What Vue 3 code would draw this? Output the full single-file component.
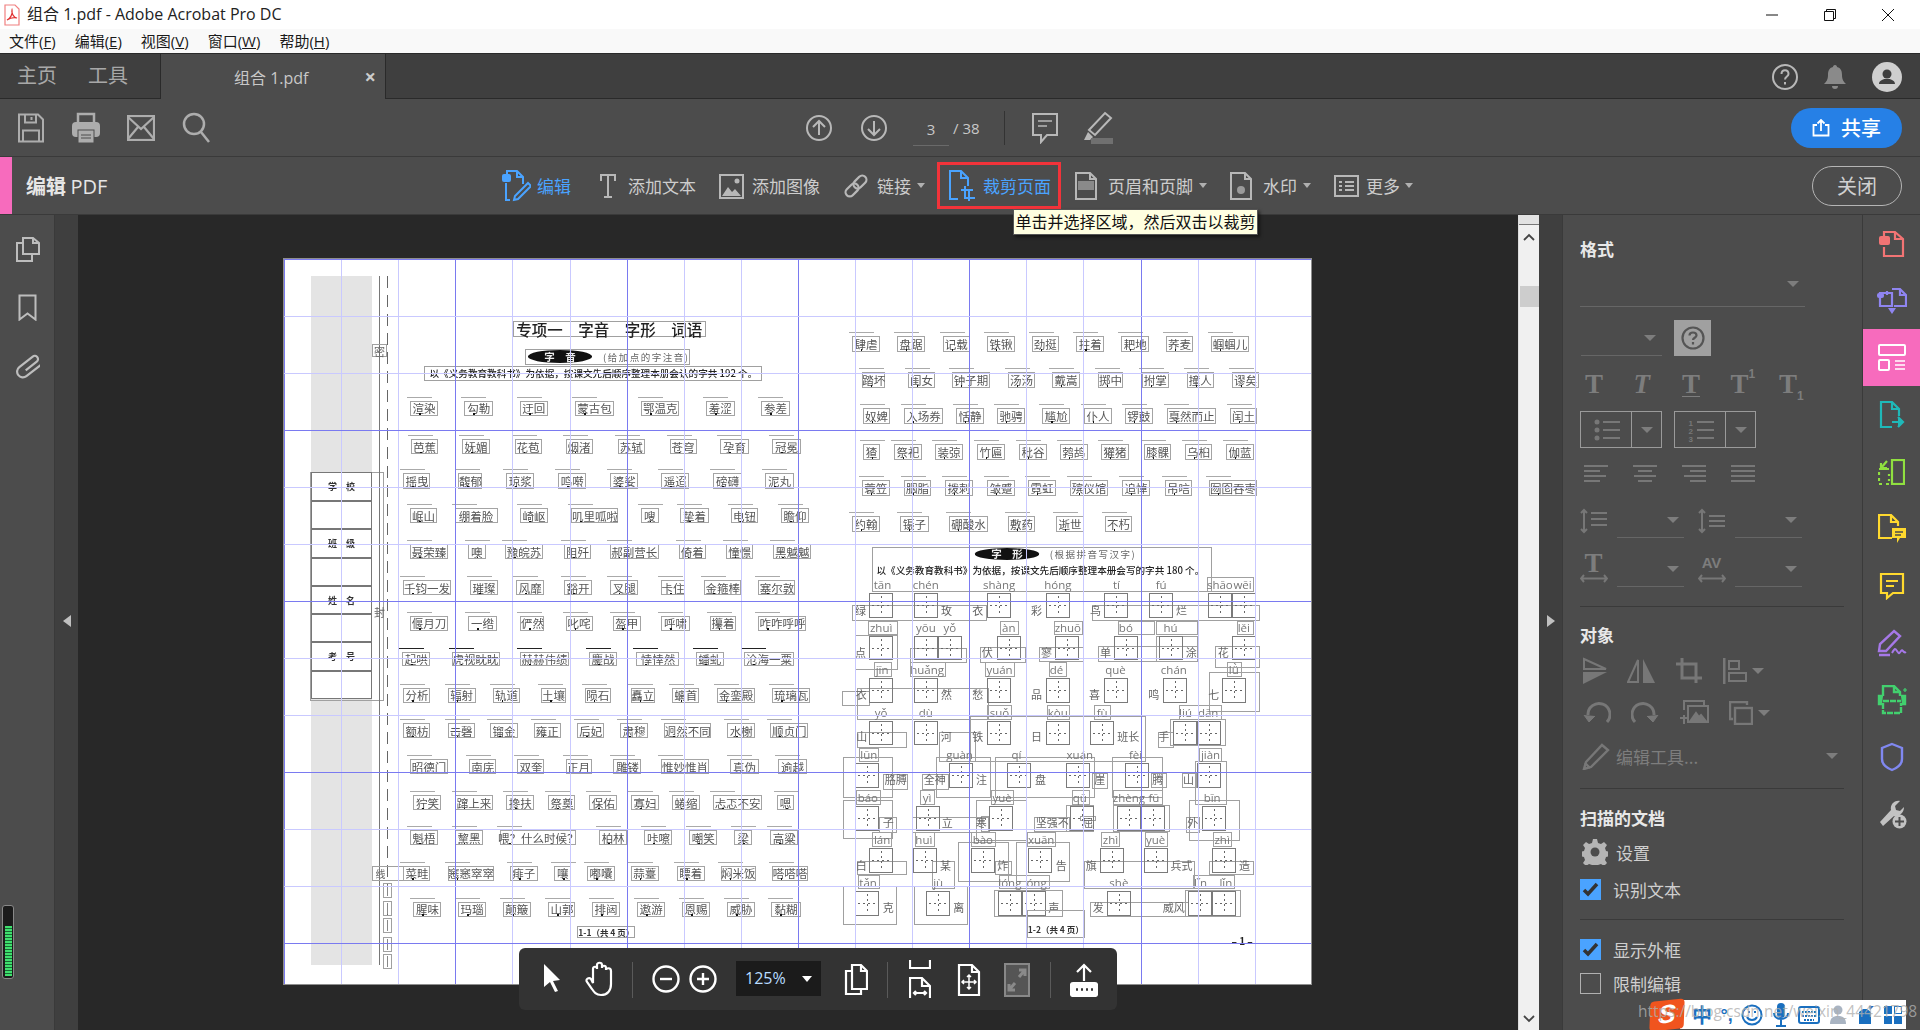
<script setup>
const pieces = []
const px = (n) => n.toFixed(1) + 'px'
const add = (cls, x1, y1, x2, y2, text = '') => pieces.push({ cls, text, style: { left: px(x1), top: px(y1), width: px(x2 - x1), height: px(y2 - y1) } })
// Left half coordinates measured at 2.904 / 3 scale, right half at 3 / 3 scale.
const lx = (x) => x / 2.904 - 4
const ly = (y) => y / 3 - 5
const rx = (x) => x / 3 + 536.5
const ry = (y) => y / 3 + 380
const L = (cls, a, b, c, d, t) => add(cls, lx(a), ly(b), lx(c), ly(d), t)
const R = (cls, a, b, c, d, t) => add(cls, rx(a), ry(b), rx(c), ry(d), t)

// page furniture on the left
L('hatch', 90, 67, 267, 2132)
L('frame', 88, 655, 303, 1342)
;[655, 742, 826, 913, 997, 1081, 1165, 1250].forEach((y, i, a) => {
  const labels = { 0: '学　校', 2: '班　级', 4: '姓　名', 6: '考　号' }
  L('trow', 90, y, 267, a[i + 1] || 1335, labels[i] || '')
})
L('vline', 288, 67, 290, 2132)
L('dline', 312, 67, 315, 2000)
L('frame lab', 266, 270, 312, 310, '密')
L('lab', 275, 1050, 303, 1095, '封')
L('frame lab-left', 266, 1837, 437, 1881, '线')
;[1888, 1942, 1993, 2050, 2101].forEach((y) => L('frame tick', 300, y, 324, y + 43))

// titles
L('frame head', 676, 200, 1236, 250, '专项一　字音　字形　词语')
L('frame', 710, 286, 1190, 334)
L('pill', 720, 288, 906, 326, '字　音')
L('note', 938, 292, 1175, 324, '(给加点的字注音)')
L('frame intro', 419, 335, 1401, 380, '以《义务教育教科书》为依据，按课文先后顺序整理本册会认的字共 192 个。')

const leftRows = [
  [442, 485, '渲染 378 458,勾勒 535 620,迂回 697 777,蒙古包 857 969,鄂温克 1049 1160,羞涩 1237 1320,参差 1398 1480'],
  [555, 601, '芭蕉 381 458,妩媚 529 609,花苞 681 760,烟渚 829 908,苏轼 980 1060,苍穹 1131 1210,孕育 1279 1361,冠冕 1430 1512'],
  [658, 704, '摇曳 358 437,馥郁 518 588,琼浆 657 739,鸣啭 808 890,婆娑 959 1041,遥迢 1107 1189,磅礴 1258 1341,泥丸 1409 1492'],
  [763, 808, '岷山 378 455,绷着脸 507 632,崎岖 698 777,叽里呱啦 846 983,嗖 1048 1100,挚着 1162 1245,电钮 1310 1388,瞻仰 1456 1535'],
  [870, 916, '聂荣臻 378 487,噢 545 597,豫皖苏 654 763,阻歼 826 902,郝副营长 958 1100,倚着 1158 1236,憧憬 1295 1375,黑魆魆 1432 1543'],
  [978, 1024, '千钧一发 358 496,璀璨 553 632,风靡 686 768,豁开 826 905,叉腿 958 1041,卡住 1107 1175,金箍棒 1232 1340,塞尔敦 1389 1497'],
  [1085, 1130, '偃月刀 378 487,一绺 547 629,俨然 698 768,叱咤 829 908,盔甲 967 1047,呼啸 1107 1190,攥着 1248 1325,咋咋呼呼 1389 1529'],
  [1193, 1237, '起哄 355 437,虎视眈眈 498 638,赫赫伟绩 698 838,鏖战 898 978,悻悻然 1035 1160,蟠虬 1208 1288,沧海一粟 1348 1492', 'dk'],
  [1301, 1347, '分析 358 437,辐射 487 568,轨道 617 698,土壤 759 830,陨石 885 960,矗立 1018 1088,螭首 1138 1218,金銮殿 1268 1380,琉璃瓦 1430 1540'],
  [1408, 1453, '额枋 358 437,击磬 487 565,镏金 611 690,雍正 737 815,后妃 863 942,肃穆 988 1068,迥然不同 1116 1252,水榭 1299 1380,顺贞门 1424 1533'],
  [1515, 1561, '昭德门 378 487,南庑 550 628,双奎 689 768,正月 829 905,雕镂 968 1050,惟妙惟肖 1107 1245,真伪 1308 1390,逾越 1447 1530'],
  [1623, 1669, '狞笑 387 469,蹿上来 507 620,搀扶 657 739,祭奠 779 858,保佑 898 980,寡妇 1020 1100,蜷缩 1138 1220,忐忑不安 1258 1400,嗯 1444 1492'],
  [1729, 1774, '魁梧 378 458,黧黑 508 590,喂？什么时候？ 640 860,柏林 927 1008,咔嚓 1058 1140,嘲笑 1189 1270,梁 1319 1372,高粱 1424 1505'],
  [1835, 1881, '菜畦 358 437,窸窸窣窣 487 622,痱子 668 748,嚷 796 846,嘟囔 892 972,蒜薹 1018 1100,瞟着 1153 1233,焖米饭 1280 1382,嗒嗒嗒 1428 1535'],
  [1943, 1989, '腥味 387 469,玛瑙 518 597,颠簸 648 728,山郭 779 858,排闼 907 987,遨游 1038 1118,恩赐 1168 1248,威胁 1298 1380,黏糊 1427 1512'],
]
leftRows.forEach(([a, b, s, extra]) => s.split(',').forEach((w) => {
  const [t, x1, x2] = w.split(' ')
  L('word ' + (extra || ''), +x1, a, +x2, b, t)
}))
L('frame foot', 863, 2015, 1032, 2051, '1-1（共 4 页）')

const rightRows = [
  [247, 293, '肆虐 94 179,盘踞 229 314,记载 367 448,铁锹 499 584,劲挺 633 716,拄着 767 851,耙地 901 987,荞麦 1036 1118,蝈蝈儿 1171 1286'],
  [355, 401, '踏坏 124 195,闺女 262 344,钟子期 394 509,汤汤 562 644,戴嵩 694 779,掷中 832 908,拊掌 963 1045,撞人 1099 1180,谬矣 1234 1316'],
  [463, 509, '奴婢 127 209,入场券 250 368,恬静 406 491,驰骋 529 614,尴尬 665 749,仆人 790 875,锣鼓 913 997,戛然而止 1039 1187,闰土 1228 1310'],
  [571, 617, '猹 127 179,祭祀 220 305,装弶 343 428,竹匾 469 554,秕谷 595 680,鹁鸪 717 802,獾猪 841 926,膝髁 970 1052,乌桕 1093 1175,伽蓝 1216 1301'],
  [679, 725, '蓑笠 123 209,胭脂 250 332,拨刺 373 458,皱蹙 499 584,霓虹 622 707,殡仪馆 748 863,追悼 904 989,吊唁 1033 1115,囫囵吞枣 1165 1310'],
  [787, 833, '约翰 94 179,镊子 238 326,硼酸水 385 503,敷药 562 644,逝世 706 791,不朽 853 935'],
]
rightRows.forEach(([a, b, s]) => s.split(',').forEach((w) => {
  const [t, x1, x2] = w.split(' ')
  R('word', +x1, a - 1155, +x2, b - 1155, t)
}))

// 字形 section: coordinates share one origin
R('frame', 154, -275, 1175, -140)
R('pill', 463, -272, 656, -238, '字　形')
R('note', 688, -270, 950, -240, '(根据拼音写汉字)')
R('intro plain', 168, -226, 1170, -190, '以《义务教育教科书》为依据，按课文先后顺序整理本册会写的字共 180 个。')

const frames = [
  [1158, -185, 1300, -140], [94, -101, 500, -55], [814, -101, 1320, -55],
  [142, -55, 233, -13], [538, -55, 596, -13], [700, -55, 788, -13], [892, -55, 1005, -13], [1005, -55, 1133, -13], [1250, -55, 1300, -13],
  [104, -13, 232, 94], [268, 27, 440, 73], [478, 25, 617, 73], [656, 25, 790, 70], [833, 22, 1133, 68], [1007, -10, 1133, 68], [1184, 22, 1320, 88],
  [160, 70, 214, 115], [268, 70, 377, 115], [493, 70, 583, 115], [685, 70, 740, 115], [1220, 70, 1265, 115],
  [64, 155, 148, 200], [108, 148, 505, 242], [1165, 100, 1318, 220],
  [500, 197, 575, 242], [680, 197, 749, 242], [820, 197, 872, 242], [1075, 197, 1205, 242],
  [108, 280, 260, 326], [355, 280, 466, 370], [1012, 280, 1060, 326], [1048, 240, 1218, 322], [448, 230, 977, 370],
  [115, 326, 175, 370], [1135, 326, 1205, 368],
  [188, 405, 264, 452], [305, 405, 386, 452], [815, 403, 862, 450], [990, 403, 1040, 447], [1085, 403, 1130, 447],
  [68, 355, 217, 476], [347, 355, 512, 476], [523, 355, 825, 476], [875, 355, 1028, 476], [1122, 367, 1220, 497],
  [106, 452, 182, 497], [298, 452, 344, 497], [512, 452, 580, 497], [755, 452, 810, 497], [877, 452, 1028, 497],
  [175, 535, 230, 581], [482, 530, 508, 578], [640, 535, 750, 580], [778, 532, 828, 545], [1096, 535, 1138, 581],
  [68, 484, 217, 601], [275, 535, 505, 581], [466, 484, 620, 605], [737, 497, 822, 578], [878, 497, 1048, 578], [1105, 484, 1258, 605],
  [155, 580, 215, 625], [284, 580, 343, 625], [452, 580, 526, 625], [620, 580, 706, 625], [842, 580, 900, 625], [974, 580, 1042, 625], [1178, 580, 1236, 625],
  [108, 665, 260, 707], [335, 665, 404, 750], [412, 610, 565, 730], [586, 610, 749, 730], [790, 665, 1125, 750], [1165, 665, 1300, 707], [523, 665, 575, 707],
  [112, 707, 178, 750], [535, 707, 688, 750], [1118, 707, 1243, 750],
  [68, 740, 230, 857], [280, 740, 443, 857], [520, 752, 728, 835], [808, 790, 1105, 835], [1093, 752, 1262, 833],
]
frames.forEach((f) => R('frame', ...f))

const cells = [
  [-137, [145, 280, 499, 676, 850, 985, 1162, 1234]],
  [-10, [145, 280, 352, 529, 703, 880, 1015, 1234]],
  [118, [145, 280, 499, 676, 850, 1027, 1204]],
  [245, [145, 280, 499, 676, 808, 1058, 1130]],
  [373, [104, 385, 559, 736, 912, 1130]],
  [502, [104, 285, 505, 748, 888, 962, 1143]],
  [628, [145, 278, 450, 622, 838, 970, 1174]],
  [757, [104, 316, 531, 603, 859, 1103, 1175]],
]
cells.forEach(([y, xs]) => xs.forEach((x) => R('cell', x, y, x + 73, y + 73)))

const pin = [
  [-164, 'tān 186,chén 316,shàng 536,hóng 712,tí 888,fú 1022,shāo 1198,wēi 1266'],
  [-35, 'zhuì 182,yōu 316,yǒ 388,àn 565,zhuō 742,bó 916,hú 1050,lěi 1270'],
  [92, 'jīn 185,huǎng 320,yuán 537,dé 708,què 885,chán 1060,lǜ 1240'],
  [220, 'yǒ 182,dù 316,suǒ 537,kòu 712,fù 845,liú 1095,dān 1163'],
  [346, 'lūn 145,guàn 417,qí 588,xuán 778,fèi 945,jiàn 1170'],
  [474, 'báo 142,yì 320,yuè 545,qū 778,zhèng 925,fū 1000,bīn 1175'],
  [601, 'lán 185,huì 310,bào 487,xuān 662,zhì 870,yuè 1005,zhì 1205'],
  [730, 'tǎn 143,jù 353,lóng 568,óng 648,shè 895,lǐn 1140,lǐn 1216'],
]
pin.forEach(([y, s]) => s.split(',').forEach((w) => {
  const [t, x] = w.split(' ')
  R('pin', +x - 70, y - 24, +x + 70, y + 24, t)
}))
const labs = [
  [-87, '绿 120,玫 378,衣 472,彩 648,鸟 825,烂 1083'],
  [38, '点 120,伏 500,寥 678,单 855,涂 1112,花 1208'],
  [165, '衣 122,然 378,愁 472,品 648,喜 822,鸣 1000,七 1180'],
  [292, '山 124,河 377,铁 472,日 648,班长 923,手 1030'],
  [420, '胳膊 226,全神 343,注 483,盘 660,崖 838,腾 1012,山 1104'],
  [550, '子 203,立 380,寒 482,坚强不 695,屈 802,外 1117'],
  [678, '白 122,某 375,炸 547,告 722,旗 812,兵式 1083,造 1272'],
  [805, '克 203,离 415,声 700,发 833,威风 1060'],
]
labs.forEach(([y, s]) => s.split(',').forEach((w) => {
  const [t, x] = w.split(' ')
  R('lab', +x - 70, y - 24, +x + 70, y + 24, t)
}))
R('frame foot low', 619, 812, 793, 898, '1-2（共 4 页）')
R('lab pageno', 1200, 885, 1330, 925, '– 1 –')

const vLines = Array.from({ length: 18 }, (_, k) => ({ left: px(57.1 * k), dark: k % 3 === 0 }))
const hLines = Array.from({ length: 13 }, (_, k) => ({ top: px(57 * k), dark: k % 3 === 0 }))
</script>

<template>
  <div class="app">
    <header class="titlebar">
      <svg class="pdf-ico" width="16" height="22" viewBox="0 0 16 22" fill="none">
        <path d="M1 1h10l4 4v16H1z" fill="#fff" stroke="#f08080" stroke-width="1.2" />
        <path d="M3 16c3-1 6-6 5-10-1 3 2 8 5 8-3-1-7 0-10 2z" stroke="#e03030" stroke-width="1.2" />
      </svg>
      <span class="title-text">组合 1.pdf - Adobe Acrobat Pro DC</span>
      <div class="winbtns">
        <svg width="14" height="14" viewBox="0 0 14 14"><path d="M1 7h12" stroke="#111" /></svg>
        <svg width="14" height="14" viewBox="0 0 14 14" fill="none" stroke="#111"><path d="M1.5 3.5h9v9h-9zM3.5 3.5v-2h9v9h-2" /></svg>
        <svg width="14" height="14" viewBox="0 0 14 14"><path d="M1 1l12 12M13 1L1 13" stroke="#111" /></svg>
      </div>
    </header>

    <nav class="menubar">
      <span>文件(<u>F</u>)</span><span>编辑(<u>E</u>)</span><span>视图(<u>V</u>)</span><span>窗口(<u>W</u>)</span><span>帮助(<u>H</u>)</span>
    </nav>

    <div class="tabbar">
      <div class="home-tabs"><span>主页</span><span>工具</span></div>
      <div class="doc-tab"><span class="doc-name">组合 1.pdf</span><span class="doc-x">×</span></div>
      <div class="tab-right">
        <svg width="26" height="26" viewBox="0 0 26 26" fill="none" stroke="#b8b8b8" stroke-width="2"><circle cx="13" cy="13" r="12" /><path d="M9.5 10c0-5 7-5 7 0 0 2.500-3.500 2.500-3.500 5.500" /><path d="M13 18v2.500" /></svg>
        <svg width="24" height="26" viewBox="0 0 24 26" fill="#8a8a8a"><path d="M12 1c1.500 0 2 1 2 2 4 1 5 4 5 8 0 5 2 7 4 9H1c2-2 4-4 4-9 0-4 1-7 5-8 0-1 .5-2 2-2zM9 22h6c0 2-1 3-3 3s-3-1-3-3z" /></svg>
        <svg width="30" height="30" viewBox="0 0 30 30"><circle cx="15" cy="15" r="15" fill="#cfcfcf" /><circle cx="15" cy="12" r="4.500" fill="#3f3f3f" /><path d="M7 22c0-3 3-4 5-5h6c2 1 5 2 5 5z" fill="#3f3f3f" /></svg>
      </div>
    </div>

    <div class="toolbar tb1">
      <span class="slot55">
        <svg width="26" height="30" viewBox="0 0 26 30" fill="none" stroke="#adadad" stroke-width="2"><path d="M1 1.500h19l5 5v22H1z" /><path d="M7 1.500v8h11v-8M13.500 4v3M5 28.500v-11h16v11" /></svg>
      </span>
      <span class="slot55">
        <svg width="28" height="32" viewBox="0 0 28 32"><path d="M6 10V2h16v8" fill="none" stroke="#adadad" stroke-width="2.500" /><rect x="0" y="10" width="28" height="15" rx="4" fill="#adadad" /><rect x="6" y="18" width="16" height="13" fill="#adadad" stroke="#4c4c4c" /><path d="M9 23h10M9 26h10" stroke="#4c4c4c" /></svg>
      </span>
      <span class="slot55">
        <svg width="28" height="26" viewBox="0 0 28 26" fill="none" stroke="#adadad" stroke-width="2.200"><rect x="1" y="1" width="26" height="24" /><path d="M1 2l13 12L27 2M1 24l10-12M27 24L17 12" /></svg>
      </span>
      <span class="slot55">
        <svg width="28" height="32" viewBox="0 0 28 32" fill="none" stroke="#adadad" stroke-width="2.500"><circle cx="12" cy="12" r="10" /><path d="M19 20l8 10" /></svg>
      </span>
      <span class="slot55 nav-first">
        <svg width="26" height="26" viewBox="0 0 26 26" fill="none" stroke="#b8b8b8" stroke-width="2"><circle cx="13" cy="13" r="12" /><path d="M13 20V6M7 12l6-6 6 6" /></svg>
      </span>
      <span class="slot55">
        <svg width="26" height="26" viewBox="0 0 26 26" fill="none" stroke="#b8b8b8" stroke-width="2"><circle cx="13" cy="13" r="12" /><path d="M13 6v14M7 14l6 6 6-6" /></svg>
      </span>
      <span class="page-input">3</span>
      <span class="page-total">/ 38</span>
      <span class="tb-sep"></span>
      <span class="slot-comment">
        <svg width="26" height="32" viewBox="0 0 26 32" fill="none" stroke="#b8b8b8" stroke-width="2"><path d="M1 2h24v21H15l-6 7v-7H1z" /><path d="M6 9h14M6 14h9" stroke-width="1.500" /></svg>
      </span>
      <span class="slot-mark">
        <svg width="30" height="34" viewBox="0 0 30 34" fill="none"><path d="M22 2l6 5L12 24l-6-5z" stroke="#b8b8b8" stroke-width="2" /><path d="M5 21l5 5-3 3H1z" fill="#b8b8b8" /><rect x="8" y="27" width="22" height="6" fill="#707070" /></svg>
      </span>
      <button class="share">
        <svg width="18" height="18" viewBox="0 0 18 18" fill="none" stroke="#fff" stroke-width="1.800"><path d="M5 6H1.500v10.500h15V6H13M9 12V1M5.500 4.500L9 1l3.500 3.500" /></svg>
        <span>共享</span>
      </button>
    </div>

    <div class="toolbar tb2">
      <span class="pink-mark"></span>
      <span class="tb2-title">编辑 <span class="pdf-word">PDF</span></span>
      <div class="tools">
        <span class="tool blue t-edit">
          <svg width="29" height="32" viewBox="0 0 29 32" fill="none" stroke="#4aa3ff" stroke-width="2"><path d="M5 6V1h10l6 6v7M8 30H4V13" /><path d="M15 1v6h6" /><rect x="0" y="4" width="9" height="8" rx="2" fill="#4aa3ff" stroke="none" /><path d="M26 13l3 3-13 13-4 1 1-4z" /></svg>
          编辑
        </span>
        <span class="tool t-text">
          <svg width="28" height="28" viewBox="0 0 28 28" fill="#b8b8b8"><path d="M6 2h16v7h-2V4h-5v20h3v2H10v-2h3V4H8v5H6z" /></svg>
          添加文本
        </span>
        <span class="tool t-image">
          <svg width="25" height="26" viewBox="0 0 25 26"><rect x="1" y="2" width="23" height="23" fill="none" stroke="#b8b8b8" stroke-width="2" /><path d="M3 23l6-9 4 5 3-3 6 7z" fill="#b8b8b8" /><circle cx="18" cy="8" r="2.500" fill="#b8b8b8" /></svg>
          添加图像
        </span>
        <span class="tool t-image">
          <svg width="26" height="28" viewBox="0 0 28 28" fill="none" stroke="#b8b8b8" stroke-width="2.400"><g transform="rotate(-45 14 14)"><rect x="0" y="9.500" width="16" height="9" rx="4.500" /><rect x="12" y="9.500" width="16" height="9" rx="4.500" /></g></svg>
          链接<i class="caret"></i>
        </span>
        <span class="tool blue t-crop">
          <svg width="26" height="32" viewBox="0 0 26 32" fill="none" stroke="#4aa3ff" stroke-width="2"><path d="M9 29H1V1h11l7 7v8M12 1v7h7" /><path d="M12 20h12M16 16v12h10M20 20v11" /></svg>
          裁剪页面
        </span>
        <span class="tool t-header">
          <svg width="22" height="28" viewBox="0 0 22 28"><path d="M1 1h14l6 6v20H1z" fill="none" stroke="#b8b8b8" stroke-width="2" /><rect x="3" y="9" width="16" height="9" fill="#8a8a8a" /><path d="M15 1v6h6" fill="none" stroke="#b8b8b8" stroke-width="2" /></svg>
          页眉和页脚<i class="caret"></i>
        </span>
        <span class="tool t-header">
          <svg width="22" height="28" viewBox="0 0 22 28"><path d="M1 1h14l6 6v20H1zM15 1v6h6" fill="none" stroke="#b8b8b8" stroke-width="2" /><circle cx="11" cy="18" r="4" fill="#9a9a9a" /></svg>
          水印<i class="caret"></i>
        </span>
        <span class="tool t-more">
          <svg width="25" height="24" viewBox="0 0 25 24" fill="none" stroke="#b8b8b8" stroke-width="2"><rect x="1" y="2" width="23" height="20" /><path d="M5 8h3M5 12h3M5 16h3M11 8h9M11 12h9M11 16h9" /></svg>
          更多<i class="caret"></i>
        </span>
      </div>
      <button class="close">关闭</button>
    </div>

    <main class="main">
      <aside class="left-rail">
        <svg width="25" height="27" viewBox="0 0 25 27" fill="none" stroke="#bdbdbd" stroke-width="2"><path d="M8 2h10l6 5v11H8z" /><path d="M18 2v5h6M8 7H2v18h15v-7" /></svg>
        <svg width="19" height="27" viewBox="0 0 19 27" fill="none" stroke="#bdbdbd" stroke-width="2"><path d="M1.500 1.500h16v24l-8-6-8 6z" /></svg>
        <svg width="26" height="27" viewBox="0 0 26 27" fill="none" stroke="#bdbdbd" stroke-width="2.200"><g transform="rotate(-38 13 13.500) translate(0 7)"><path d="M9 9.500h14a3 3 0 0 0 0-6.500H6a5.500 5.500 0 0 0 0 11.500h18" /></g></svg>
        <div class="meter"><div class="meter-fill"></div></div>
      </aside>
      <div class="strip"><i class="tri-left"></i></div>

      <section class="doc">
        <div class="page">
          <div class="page-content">
            <div v-for="(p, i) in pieces" :key="i" :class="['pc', p.cls]" :style="p.style">{{ p.text }}</div>
          </div>
          <i v-for="v in vLines" :key="'v' + v.left" class="gv" :class="{ dark: v.dark }" :style="{ left: v.left }"></i>
          <i v-for="h in hLines" :key="'h' + h.top" class="gh" :class="{ dark: h.dark }" :style="{ top: h.top }"></i>
        </div>
        <div class="tip">单击并选择区域，然后双击以裁剪</div>
        <div class="float-bar">
          <svg class="f-arrow" width="18" height="30" viewBox="0 0 18 30" fill="#fff"><path d="M1 1l16 16-7 1 5 10-3 1-5-10-6 5z" /></svg>
          <svg class="f-hand" width="30" height="36" viewBox="0 0 30 36" fill="none" stroke="#fff" stroke-width="2.200"><path d="M8 22V8c0-3 4-3 4 0V4c0-3 5-3 5 0v3c0-3 4-3 4 0v2c0-2 5-3 5 1v13c0 7-4 11-10 11-5 0-7-3-9-6l-5-7c-2-3 2-5 4-3z" /></svg>
          <i class="f-sep s1"></i>
          <svg class="f-minus" width="28" height="28" viewBox="0 0 28 28" fill="none" stroke="#fff" stroke-width="2.400"><circle cx="14" cy="14" r="12.500" /><path d="M8 14h12" /></svg>
          <svg class="f-plus" width="28" height="28" viewBox="0 0 28 28" fill="none" stroke="#fff" stroke-width="2.400"><circle cx="14" cy="14" r="12.500" /><path d="M8 14h12M14 8v12" /></svg>
          <div class="f-zoom"><span>125%</span><i class="f-caret"></i></div>
          <svg class="f-copy" width="24" height="34" viewBox="0 0 24 34" fill="none" stroke="#fff" stroke-width="2.200"><path d="M8 2h9l6 6v18H8z" /><path d="M17 2v6h6M8 8H2v23h15v-5" /></svg>
          <i class="f-sep s2"></i>
          <svg class="f-fitw" width="22" height="38" viewBox="0 0 22 38" fill="none" stroke="#fff" stroke-width="2.200"><path d="M1 0v8h20V0M1 38V18h12l8 8v12M13 18v8h8M5 33h12M7 31l-2 2 2 2M15 31l2 2-2 2" /></svg>
          <svg class="f-fitp" width="24" height="34" viewBox="0 0 24 34" fill="none" stroke="#fff" stroke-width="2.200"><path d="M2 2h13l7 7v23H2zM15 2v7h7" /><path d="M12 12v14M5 19h14M10 14l2-2 2 2M10 24l2 2 2-2M7 17l-2 2 2 2M17 17l2 2-2 2" stroke-width="1.500" /></svg>
          <svg class="f-full" width="26" height="34" viewBox="0 0 26 34"><rect x="1" y="1" width="24" height="32" fill="#555" stroke="#888" stroke-width="2" /><path d="M15 14l6-7M15 7h6v6M11 20l-6 7M5 21v6h6" fill="none" stroke="#8a8a8a" stroke-width="3" /></svg>
          <i class="f-sep s3"></i>
          <svg class="f-up" width="28" height="34" viewBox="0 0 28 34" fill="none" stroke="#fff" stroke-width="2.200"><path d="M14 18V2M7 9l7-7 7 7" /><rect x="1" y="20" width="26" height="13" rx="2" fill="#fff" /><path d="M6 26.500h2M11 26.500h2M16 26.500h2M21 26.500h2" stroke="#333" stroke-width="2.500" /></svg>
        </div>
      </section>

      <div class="scrollbar">
        <div class="sb-cap"></div>
        <svg class="sb-up" width="12" height="8" viewBox="0 0 12 8" fill="none" stroke="#444" stroke-width="1.800"><path d="M1 7l5-5 5 5" /></svg>
        <div class="sb-thumb"></div>
        <svg class="sb-down" width="12" height="8" viewBox="0 0 12 8" fill="none" stroke="#444" stroke-width="1.800"><path d="M1 1l5 5 5-5" /></svg>
      </div>
      <div class="strip strip-r"><i class="tri-right"></i></div>

      <aside class="panel">
        <h3 class="p-title first">格式</h3>
        <div class="drop font-drop"><i class="caret big"></i></div>
        <div class="size-row">
          <div class="drop size-drop"><i class="caret big"></i></div>
          <div class="qbox"><svg width="24" height="24" viewBox="0 0 24 24" fill="none" stroke="#555" stroke-width="2.200"><circle cx="12" cy="12" r="10.500" /><path d="M8.500 9.500c0-4 7-4 7 0 0 2-3.500 2.500-3.500 4.500M12 16v2.500" /></svg></div>
        </div>
        <div class="t-row">
          <span class="ft">T</span><span class="ft ital">T</span><span class="ft under">T</span><span class="ft">T<sup>1</sup></span><span class="ft">T<sub>1</sub></span>
        </div>
        <div class="list-row">
          <div class="listbox">
            <div class="lb-main"><svg width="26" height="24" viewBox="0 0 26 24" fill="#777"><circle cx="3" cy="4" r="2.500" /><circle cx="3" cy="12" r="2.500" /><circle cx="3" cy="20" r="2.500" /><path d="M9 3h17v2H9zM9 11h17v2H9zM9 19h17v2H9z" /></svg></div>
            <div class="lb-arrow"><i class="caret big"></i></div>
          </div>
          <div class="listbox">
            <div class="lb-main"><svg width="26" height="24" viewBox="0 0 26 24" fill="#777"><path d="M9 3h17v2H9zM9 11h17v2H9zM9 19h17v2H9z" /><text x="0.500" y="7.500" font-size="8" font-weight="700" font-family="Liberation Sans">1</text><text x="0.500" y="15.500" font-size="8" font-weight="700" font-family="Liberation Sans">2</text><text x="0.500" y="23.500" font-size="8" font-weight="700" font-family="Liberation Sans">3</text></svg></div>
            <div class="lb-arrow"><i class="caret big"></i></div>
          </div>
        </div>
        <div class="align-row">
          <svg width="24" height="18" viewBox="0 0 24 18" stroke="#777" stroke-width="2"><path d="M0 1h24M0 6h16M0 11h22M0 16h16" /></svg>
          <svg width="24" height="18" viewBox="0 0 24 18" stroke="#777" stroke-width="2"><path d="M0 1h24M5 6h14M1 11h22M5 16h14" /></svg>
          <svg width="24" height="18" viewBox="0 0 24 18" stroke="#777" stroke-width="2"><path d="M0 1h24M8 6h16M2 11h22M8 16h16" /></svg>
          <svg width="24" height="18" viewBox="0 0 24 18" stroke="#777" stroke-width="2"><path d="M0 1h24M0 6h24M0 11h24M0 16h24" /></svg>
        </div>
        <div class="spacing-row">
          <svg width="27" height="26" viewBox="0 0 27 26" fill="none" stroke="#777" stroke-width="2"><path d="M4 2v22M1 5l3-3 3 3M1 21l3 3 3-3M11 5h16M11 11h16M11 17h16" /></svg>
          <div class="drop num-drop"><i class="caret big"></i></div>
          <svg width="27" height="26" viewBox="0 0 27 26" fill="none" stroke="#777" stroke-width="2"><path d="M4 2v22M1 5l3-3 3 3M1 21l3 3 3-3M11 8h16M11 13h16M11 18h16" /></svg>
          <div class="drop num-drop"><i class="caret big"></i></div>
        </div>
        <div class="scale-row">
          <span class="scale-ic"><b class="ft tiny">T</b><svg width="28" height="9" viewBox="0 0 28 9" fill="none" stroke="#777" stroke-width="2"><path d="M1 4.500h26M4 1L1 4.500 4 8M24 1l3 3.500L24 8" /></svg></span>
          <div class="drop num-drop"><i class="caret big"></i></div>
          <span class="scale-ic"><b class="av">AV</b><svg width="28" height="9" viewBox="0 0 28 9" fill="none" stroke="#777" stroke-width="2"><path d="M1 4.500h26M4 1L1 4.500 4 8M24 1l3 3.500L24 8" /></svg></span>
          <div class="drop num-drop"><i class="caret big"></i></div>
        </div>
        <hr class="divider d1" />
        <h3 class="p-title t2">对象</h3>
        <div class="obj-row r1">
          <svg width="24" height="28" viewBox="0 0 24 28" fill="#777"><path d="M1 2l22 10H1z" fill="none" stroke="#777" stroke-width="2" /><path d="M0 15h24L0 27z" /></svg>
          <svg width="28" height="26" viewBox="0 0 28 26" fill="#777"><path d="M11 2L1 24h10z" fill="none" stroke="#777" stroke-width="2" /><path d="M16 1l12 24H16z" /></svg>
          <svg width="28" height="28" viewBox="0 0 28 28" fill="none" stroke="#777" stroke-width="3"><path d="M1 7h20v19M7 1v20h20" /></svg>
          <span class="obj-drop"><svg width="24" height="26" viewBox="0 0 24 26" fill="none" stroke="#777" stroke-width="2"><path d="M1 0v26" stroke-width="3" /><rect x="6" y="3" width="10" height="8" /><rect x="6" y="15" width="17" height="8" /></svg><i class="caret big"></i></span>
        </div>
        <div class="obj-row r2">
          <svg width="28" height="26" viewBox="0 0 28 26" fill="none" stroke="#777" stroke-width="3"><path d="M24 22a11 11 0 1 0-19-7" /><path d="M1 15l5 7 6-6" fill="#777" stroke-width="1" /></svg>
          <svg width="28" height="26" viewBox="0 0 28 26" fill="none" stroke="#777" stroke-width="3"><path d="M4 22a11 11 0 1 1 19-7" /><path d="M27 15l-5 7-6-6" fill="#777" stroke-width="1" /></svg>
          <svg width="30" height="26" viewBox="0 0 30 26" fill="none" stroke="#777" stroke-width="2"><path d="M5 10V1h20v4" /><rect x="9" y="6" width="20" height="16" /><path d="M12 20l5-7 3 4 2-2 4 5z" fill="#777" /><path d="M1 18h8M5 15v9" /></svg>
          <span class="obj-drop"><svg width="24" height="24" viewBox="0 0 24 24" fill="none" stroke="#777" stroke-width="2.400"><path d="M4 18H1V1h17v3" /><rect x="6" y="7" width="17" height="16" /></svg><i class="caret big"></i></span>
        </div>
        <div class="tool-row">
          <svg width="28" height="28" viewBox="0 0 28 28" fill="none" stroke="#777" stroke-width="2.400"><path d="M20 3l6 5L9 25l-7 2 2-7z" /><path d="M3 21l5 5" /></svg>
          <span class="dis">编辑工具...</span>
          <i class="caret big push"></i>
        </div>
        <hr class="divider d2" />
        <h3 class="p-title t3">扫描的文档</h3>
        <div class="setting">
          <svg width="26" height="26" viewBox="0 0 26 26" fill="#b5b5b5"><path d="M11 0h4l1 4 3 1 3-2 3 3-2 3 1 3 4 1v4l-4 1-1 3 2 3-3 3-3-2-3 1-1 4h-4l-1-4-3-1-3 2-3-3 2-3-1-3-4-1v-4l4-1 1-3-2-3 3-3 3 2 3-1z" /><circle cx="13" cy="13" r="4.500" fill="#4c4c4c" /></svg>
          <span>设置</span>
        </div>
        <label class="check c1"><i class="box on"><svg width="17" height="15" viewBox="0 0 17 15" fill="none" stroke="#333" stroke-width="3.500"><path d="M2 8l4 4 9-10" /></svg></i><span>识别文本</span></label>
        <hr class="divider d3" />
        <label class="check c2"><i class="box on"><svg width="17" height="15" viewBox="0 0 17 15" fill="none" stroke="#333" stroke-width="3.500"><path d="M2 8l4 4 9-10" /></svg></i><span>显示外框</span></label>
        <label class="check c3"><i class="box"></i><span>限制编辑</span></label>
      </aside>

      <aside class="right-rail">
        <span class="rr"><svg width="26" height="28" viewBox="0 0 26 28" fill="none" stroke="#f27474" stroke-width="2.200"><path d="M5 6V2h11l8 7v17H5v-9" /><path d="M16 2v7h8" /><rect x="0" y="6" width="11" height="9" rx="2" fill="#f27474" stroke="none" /></svg></span>
        <span class="rr"><svg width="30" height="30" viewBox="0 0 30 30" fill="none" stroke="#8f85f0" stroke-width="2.200"><path d="M3 7h12v13H3zM15 3h8l6 6v11H17" /><path d="M10 5v4M23 3v6h6" /><rect x="0" y="7" width="7" height="5" rx="2" fill="#8f85f0" stroke="none" /><path d="M11 22h8l-4 6z" fill="#8f85f0" stroke="none" /></svg></span>
        <span class="rr rail-active"><svg width="28" height="28" viewBox="0 0 28 28" fill="none" stroke="#fff" stroke-width="2"><rect x="1" y="1" width="26" height="10" rx="1" /><rect x="1" y="16" width="10" height="10" rx="1" /><path d="M17 17h10M17 21h10M17 25h10" stroke-width="1.500" /></svg></span>
        <span class="rr"><svg width="26" height="28" viewBox="0 0 26 28" fill="none" stroke="#1fb8b8" stroke-width="2.200"><path d="M13 26H2V1h11l7 7v7M13 1v7h7" /><path d="M13 21h10M19 16l5 5-5 5" fill="#1fb8b8" /></svg></span>
        <span class="rr"><svg width="27" height="26" viewBox="0 0 27 26" fill="none" stroke="#90e040" stroke-width="2.200"><rect x="14" y="1" width="12" height="24" /><path d="M1 10h10M1 13v3M1 19v3M1 25h3M8 25h3M11 15v2M11 20v2M9 2L3 9" /><path d="M3 4v5h6" /></svg></span>
        <span class="rr"><svg width="28" height="30" viewBox="0 0 28 30" fill="none" stroke="#ffd92e" stroke-width="2.200"><path d="M14 24H1V1h12l7 7v4M13 1v7h7" /><path d="M14 14h14v10h-6l-3 5v-5h-5z" fill="#ffd92e" stroke="none" /><path d="M17 18h8M17 21h6" stroke="#4c4c4c" stroke-width="1.400" /></svg></span>
        <span class="rr"><svg width="26" height="28" viewBox="0 0 26 28" fill="none" stroke="#ffd92e" stroke-width="2.200"><path d="M2 2h22v19H14l-6 5v-5H2z" /><path d="M7 9h12M7 14h8" /></svg></span>
        <span class="rr"><svg width="30" height="28" viewBox="0 0 30 28" fill="none" stroke="#a678e8" stroke-width="2.400"><path d="M17 2l6 5L9 22H2l1-7zM2 26h11" /><path d="M15 24c3-5 3-5 5-2s2 3 4 0 2 3 5 1" stroke-width="2" /></svg></span>
        <span class="rr"><svg width="30" height="30" viewBox="0 0 30 30" fill="none" stroke="#42d06e" stroke-width="2.400"><path d="M6 11V1h11l6 6v4M17 1v6h6" /><path d="M6 11H2v8h3M24 11h4v8h-3" fill="#42d06e" /><path d="M6 16h18M6 18v10h18V18" stroke-dasharray="6 1" /><path d="M28 3v4M26 5h4" stroke-width="1.200" /></svg></span>
        <span class="rr"><svg width="24" height="30" viewBox="0 0 24 30" fill="none" stroke="#8088f0" stroke-width="2.400"><path d="M12 2l10 4v11c0 5-5 9-10 11C7 26 2 22 2 17V6z" /></svg></span>
        <span class="rr"><svg width="30" height="30" viewBox="0 0 30 30"><path d="M3 23l11-12c-1-5 3-10 9-9l-5 5 1 4 4 1 4-4c0 6-5 10-10 9L6 27z" fill="#c2c2c2" /><circle cx="22.500" cy="22.500" r="7" fill="#c2c2c2" /><path d="M22.500 18v9M18 22.500h9" stroke="#4c4c4c" stroke-width="2" /></svg></span>
      </aside>
    </main>

    <div class="ime">
      <span class="ime-logo">S</span>
      <div class="ime-bar">
        <b class="ime-zh">中</b>
        <span class="ime-p">°,</span>
        <svg width="22" height="22" viewBox="0 0 22 22" fill="none" stroke="#1a6fbf" stroke-width="2"><circle cx="11" cy="11" r="9.500" /><path d="M6 13c2 4 8 4 10 0M8 7v2M14 7v2" /></svg>
        <svg width="18" height="24" viewBox="0 0 18 24" fill="none" stroke="#1a6fbf" stroke-width="2"><rect x="6" y="1" width="6" height="13" rx="3" fill="#1a6fbf" /><path d="M2 10c0 8 14 8 14 0M9 17v5M4 23h10" /></svg>
        <svg width="22" height="18" viewBox="0 0 22 18" fill="none" stroke="#1a6fbf" stroke-width="2"><rect x="1" y="1" width="20" height="16" rx="2" /><path d="M4 6h14M4 10h14M6 14h10" stroke-dasharray="2 1" /></svg>
        <svg width="18" height="20" viewBox="0 0 18 20" fill="#a9b4c2"><circle cx="9" cy="5" r="4.500" /><path d="M1 19c0-6 3-8 8-8s8 2 8 8z" /></svg>
        <svg width="20" height="20" viewBox="0 0 20 20" fill="#1a6fbf"><path d="M4 7l4-3h4l4 3v12H4zM14 1l5 0-4 4z" /></svg>
        <svg width="18" height="18" viewBox="0 0 18 18" fill="#1a6fbf"><rect x="0" y="0" width="8" height="8" /><rect x="10" y="10" width="8" height="8" /><rect x="0" y="10" width="8" height="8" /><rect x="10.500" y="0.500" width="7" height="7" fill="none" stroke="#1a6fbf" /></svg>
      </div>
      <span class="watermark">https://blog.csdn.net/weixin_44421798</span>
    </div>
  </div>
</template>

<style>
html, body { margin: 0; background: #282828; overflow: hidden; }
</style>

<style scoped>
* { box-sizing: border-box; }
.app {
  width: 1920px; height: 1030px; position: relative; overflow: hidden; display: flex; flex-direction: column;
  font-family: "Noto Sans CJK SC", "Noto Sans", sans-serif; color: #cfcfcf; background: #282828;
}
.titlebar { height: 29px; background: #fff; display: flex; align-items: center; padding-left: 4px; flex: none; }
.title-text { margin-left: 7px; font: 16px/29px "Open Sans", "Noto Sans CJK SC", sans-serif; color: #222; }
.winbtns { margin-left: auto; display: flex; gap: 44px; padding-right: 25px; }
.menubar { height: 25px; flex: none; background: #f9f9f9; border-bottom: 1px solid #2a2a2a; display: flex; gap: 19px; padding-left: 9px; font-size: 15px; line-height: 24px; color: #1a1a1a; font-family: "Open Sans", "Noto Sans CJK SC", sans-serif; }
.tabbar { height: 45px; flex: none; background: #3f3f3f; display: flex; border-bottom: 1px solid #2a2a2a; }
.home-tabs { width: 160px; display: flex; gap: 31px; padding-left: 17px; font-size: 20px; line-height: 42px; color: #a8a8a8; }
.doc-tab { width: 226px; height: 45px; background: #4c4c4c; border-left: 1px solid #2a2a2a; border-right: 1px solid #2a2a2a; display: flex; align-items: center; color: #c8c8c8; font-size: 16px; font-family: "Open Sans", "Noto Sans CJK SC", sans-serif; }
.doc-name { margin-left: 73px; }
.doc-x { margin-left: 56px; font-size: 20px; font-weight: 700; color: #ccc; }
.tab-right { margin-left: auto; display: flex; align-items: center; gap: 25px; padding-right: 18px; padding-top: 1px; }
.toolbar { height: 58px; flex: none; background: #4c4c4c; border-bottom: 1px solid #3a3a3a; display: flex; align-items: center; }
.tb1 { padding-left: 3px; }
.slot55 { width: 55px; display: flex; justify-content: center; align-items: center; }
.nav-first { margin-left: 568px; }
.page-input { width: 36px; margin-left: 12px; height: 35px; line-height: 34px; border-bottom: 1px solid #6a6a6a; text-align: center; font: 15px/36px "Open Sans", sans-serif; color: #c8c8c8; margin-top: 1px; }
.page-total { margin-left: 4px; font: 15px "Open Sans", sans-serif; color: #c8c8c8; width: 26px; white-space: nowrap; }
.tb-sep { width: 1px; height: 34px; background: #333; margin-left: 25px; }
.slot-comment { margin-left: 27px; display: flex; }
.slot-mark { margin-left: 25px; display: flex; }
.share { margin-left: auto; margin-right: 18px; width: 111px; height: 40px; border: 0; border-radius: 20px; background: #2680e6; color: #fff; font: 500 20px "Noto Sans CJK SC", sans-serif; display: flex; align-items: center; justify-content: center; gap: 11px; padding: 0; }
.tb2 { position: relative; }
.pink-mark { width: 12px; height: 57px; background: #f76bbd; flex: none; }
.tb2-title { margin-left: 14px; font-size: 20px; font-weight: 700; color: #e6e6e6; width: 90px; white-space: nowrap; }
.pdf-word { font-family: "Open Sans", sans-serif; font-weight: 400; }
.tools { display: flex; align-items: center; margin-left: 386px; gap: 23px; font-size: 17px; color: #cdcdcd; }
.tool { display: flex; align-items: center; gap: 8px; white-space: nowrap; height: 47px; }
.tool.blue { color: #4aa3ff; }
.t-edit { gap: 6px; }
.t-text { gap: 6px; }
.t-header { gap: 11px; }
.t-more { gap: 7px; }
.t-crop { border: 3px solid #f2333a; margin: 0 -9px 0 -11px; padding: 0 7px 0 9px; width: 124px; }
.caret { display: inline-block; width: 0; height: 0; border: 4px solid transparent; border-top: 5px solid #b0b0b0; border-bottom: 0; margin-left: -2px; }
.t-header .caret { margin-left: -5px; }
.caret.big { border-width: 6px 6px 0; border-top-color: #7d7d7d; border-style: solid; border-left-color: transparent; border-right-color: transparent; margin: 0; }
.close { margin-left: auto; margin-right: 18px; width: 90px; height: 40px; border: 1.5px solid #b5b5b5; border-radius: 20px; background: transparent; color: #d0d0d0; font: 20px "Noto Sans CJK SC", sans-serif; padding: 0; }

.main { flex: 1; display: flex; min-height: 0; }
.left-rail { width: 55px; flex: none; background: #4c4c4c; position: relative; display: flex; flex-direction: column; align-items: center; gap: 31px; padding-top: 21px; border-right: 1px solid #3a3a3a; }
.meter { position: absolute; left: 2px; top: 690px; width: 12px; height: 74px; background: #1b1b1b; border: 1px solid #888; border-radius: 3px; }
.meter-fill { position: absolute; left: 2px; right: 1px; bottom: 2px; height: 50px; background: repeating-linear-gradient(#3fe06e 0 2px, #176a33 2px 3px); }
.strip { width: 23px; flex: none; background: #3f3f3f; display: flex; align-items: center; justify-content: center; padding-bottom: 3px; }
.tri-left { border: 6px solid transparent; border-right: 8px solid #c0c0c0; border-left: 0; }
.tri-right { border: 6px solid transparent; border-left: 8px solid #c0c0c0; border-right: 0; }
.doc { width: 1440px; flex: none; background: #282828; position: relative; padding: 43px 0 0 205px; }
.page { width: 1029px; height: 727px; background: #fff; position: relative; border: 1px solid #8e8e8e; overflow: hidden; }
.page-content { position: absolute; inset: 0; filter: blur(0.35px); }
.pc { position: absolute; }
.hatch { background: #e4e4e4; }
.frame { border: 1px solid #a0a0a0; }
.trow { background: #fff; border: 1px solid #777; display: flex; align-items: center; justify-content: center; font-size: 9px; font-weight: 700; color: #333; }
.vline { width: 1px !important; background: #777; }
.dline { width: 1px !important; background: repeating-linear-gradient(#666 0 12px, transparent 12px 19px); }
.lab { display: flex; align-items: center; justify-content: center; font-size: 11px; color: #666; white-space: nowrap; }
.lab-left { display: flex; align-items: center; padding-left: 3px; font-size: 10px; color: #666; }
.tick::after { content: ""; position: absolute; left: 3px; top: 1px; bottom: 1px; border-left: 1px solid #888; }
.head { display: flex; align-items: center; justify-content: center; font-size: 15.500px; font-weight: 500; color: #222; white-space: nowrap; }
.pill { background: #111; color: #eee; border-radius: 50%; display: flex; align-items: center; justify-content: center; font-size: 10.500px; font-weight: 700; }
.note { display: flex; align-items: center; white-space: nowrap; font-size: 9.500px; letter-spacing: 1.500px; color: #666; }
.intro { display: flex; align-items: center; justify-content: center; white-space: nowrap; font-size: 9.600px; font-weight: 500; color: #222; }
.intro.plain { justify-content: flex-start; }
.word { border: 1px solid #a4a4a4; display: flex; align-items: center; justify-content: center; white-space: nowrap; font-size: 11.500px; line-height: 14px; color: #555; }
.word::before { content: ""; position: absolute; top: -5px; left: -4px; width: 25px; height: 1px; background: #aaa; }
.word.dk::before { background: #222; }
.word::after { content: ""; position: absolute; bottom: 0; left: 8px; width: 1.500px; height: 1.500px; background: #111; }
.cell { border: 1px solid #7a7a7a; background: transparent; }
.cell::before { content: ""; position: absolute; left: 50%; top: 2px; bottom: 2px; width: 1px; background: repeating-linear-gradient(#666 0 2px, transparent 2px 5px); }
.cell::after { content: ""; position: absolute; top: 50%; left: 2px; right: 2px; height: 1px; background: repeating-linear-gradient(90deg, #666 0 2px, transparent 2px 5px); }
.pin { display: flex; align-items: center; justify-content: center; font: 11.500px "Open Sans", sans-serif; color: #777; white-space: nowrap; }
.foot { display: flex; align-items: center; justify-content: center; font-size: 8.500px; font-weight: 700; color: #333; white-space: nowrap; }
.foot.low { align-items: flex-end; padding-bottom: 2px; }
.pageno { font-weight: 700; color: #222; font-size: 10px; }
.gv { position: absolute; top: 0; bottom: 0; width: 1px; background: #c9c9ff; }
.gv.dark { background: #7a7af0; }
.gh { position: absolute; left: 0; right: 0; height: 1px; background: #c9c9ff; }
.gh.dark { background: #7a7af0; }
.tip { position: absolute; left: 935px; top: -6px; width: 245px; height: 26px; background: #ffffe1; border: 1px solid #555; box-shadow: 2px 2px 3px rgba(0,0,0,.5); color: #111; font-size: 16px; line-height: 23px; text-align: center; white-space: nowrap; z-index: 3; }
.float-bar { position: absolute; left: 441px; top: 733px; width: 598px; height: 62px; background: #333; border-radius: 6px; }
.float-bar > * { position: absolute; }
.f-arrow { left: 24px; top: 15px; }
.f-hand { left: 66px; top: 13px; }
.f-sep { width: 1px; height: 36px; top: 14px; background: #5a5a5a; }
.s1 { left: 113px; } .s2 { left: 368px; } .s3 { left: 531px; }
.f-minus { left: 133px; top: 17px; }
.f-plus { left: 170px; top: 17px; }
.f-zoom { left: 217px; top: 13px; width: 85px; height: 35px; background: #1b1b1b; color: #b9dcff; font: 16px/35px "Open Sans", sans-serif; padding-left: 9px; }
.f-caret { position: absolute; left: 66px; top: 15px; border: 5px solid transparent; border-top: 6px solid #fff; border-bottom: 0; }
.f-copy { left: 325px; top: 15px; }
.f-fitw { left: 390px; top: 12px; }
.f-fitp { left: 438px; top: 15px; }
.f-full { left: 485px; top: 15px; }
.f-up { left: 551px; top: 15px; }

.scrollbar { width: 21px; flex: none; background: #f0f0f0; display: flex; flex-direction: column; align-items: center; position: relative; border-left: 1px solid #ddd; }
.sb-cap { width: 100%; height: 10px; background: #e2e2e2; border-bottom: 1px solid #777; flex: none; }
.sb-up { margin-top: 8px; flex: none; }
.sb-thumb { width: 19px; height: 21px; background: #cdcdcd; margin-top: 45px; flex: none; }
.sb-down { margin-top: auto; margin-bottom: 7px; flex: none; }
.strip-r { width: 23px; }
.panel { width: 301px; flex: none; background: #4c4c4c; border-left: 1px solid #3a3a3a; border-right: 1px solid #3a3a3a; padding-left: 17px; }
.p-title { margin: 0; height: 24px; font-size: 17px; line-height: 24px; font-weight: 700; color: #e8e8e8; }
.p-title.first { margin-top: 22px; }
.drop { border-bottom: 1px solid #666; display: flex; align-items: center; justify-content: flex-end; padding-right: 6px; flex: none; }
.font-drop { width: 225px; height: 46px; }
.size-row { display: flex; margin-top: 13px; height: 36px; }
.size-drop { width: 81px; height: 36px; margin-left: 1px; }
.qbox { width: 37px; height: 36px; margin-left: 12px; background: #a0a0a0; display: flex; align-items: center; justify-content: center; }
.t-row { display: flex; margin-top: 16px; height: 24px; padding-left: 5px; gap: 0; }
.ft { font: 700 27px/24px "Liberation Serif", serif; color: #7d7d7d; width: 48.500px; position: relative; display: block; white-space: nowrap; }
.ft.ital { font-style: italic; }
.ft.under { text-decoration: underline; text-underline-offset: 3px; text-decoration-thickness: 1px; }
.ft sup, .ft sub { font: 700 12px/1 "Liberation Sans", sans-serif; position: absolute; margin-left: 0; }
.ft sup { top: -4px; } .ft sub { bottom: -6px; }
.list-row { display: flex; gap: 12px; margin-top: 15px; }
.listbox { width: 82px; height: 37px; border: 1px solid #9a9a9a; display: flex; }
.lb-main { width: 51px; border-right: 1px solid #9a9a9a; display: flex; align-items: center; justify-content: center; padding-left: 2px; }
.lb-arrow { flex: 1; display: flex; align-items: center; justify-content: center; }
.align-row { display: flex; margin-top: 16px; height: 20px; gap: 25px; padding-left: 4px; align-items: center; }
.spacing-row { display: flex; margin-top: 24px; height: 30px; align-items: flex-start; }
.num-drop { width: 67px; height: 30px; margin-left: 10px; margin-right: 14px; padding-right: 5px; padding-bottom: 6px; }
.scale-row { display: flex; margin-top: 14px; height: 35px; align-items: flex-start; }
.scale-row .num-drop { height: 35px; padding-bottom: 0; }
.scale-ic { width: 27px; display: flex; flex-direction: column; align-items: center; }
.ft.tiny { width: auto; line-height: 22px; }
.av { font: 700 15px/22px "Liberation Sans", sans-serif; color: #7d7d7d; }
.divider { border: 0; height: 1px; background: #3a3a3a; width: 264px; margin: 0; }
.d1 { margin-top: 19px; } .d2 { margin-top: 18px; } .d3 { margin-top: 19px; }
.t2 { margin-top: 16px; } .t3 { margin-top: 17px; }
.obj-row { display: flex; height: 28px; align-items: center; padding-left: 3px; gap: 20px; }
.r1 { margin-top: 10px; } .r2 { margin-top: 14px; }
.obj-drop { display: flex; align-items: center; gap: 5px; }
.tool-row { display: flex; height: 28px; margin-top: 15px; align-items: center; padding-left: 2px; width: 264px; gap: 5px; }
.dis { font-size: 17px; color: #7d7d7d; margin-left: 1px; }
.push { margin-left: auto !important; margin-right: 6px !important; }
.setting { display: flex; margin-top: 8px; height: 28px; align-items: center; padding-left: 2px; gap: 8px; font-size: 17px; color: #cfcfcf; }
.check { display: flex; align-items: center; gap: 12px; height: 21px; font-size: 17px; color: #cfcfcf; }
.c1 { margin-top: 13px; } .c2 { margin-top: 19px; } .c3 { margin-top: 13px; }
.box { width: 21px; height: 21px; border: 1px solid #b0b0b0; display: flex; align-items: center; justify-content: center; }
.box.on { background: #4aa3ff; border-color: #4aa3ff; }
.right-rail { flex: 1; background: #4c4c4c; display: flex; flex-direction: column; }
.rr { height: 57px; flex: none; display: flex; align-items: center; justify-content: center; }
.rail-active { background: #f76bbd; }
.ime { position: absolute; left: 1638px; top: 1000px; width: 282px; height: 30px; }
.ime-logo { position: absolute; left: 12px; top: 0; width: 34px; height: 30px; background: #f0541e; color: #fff; font: italic 700 26px/28px "Liberation Sans", sans-serif; text-align: center; border-radius: 4px; transform: skewX(-8deg) rotate(-6deg); z-index: 2; }
.ime-bar { position: absolute; left: 42px; top: 0; width: 226px; height: 29px; background: #fff; display: flex; align-items: center; justify-content: space-between; padding: 0 4px 0 12px; }
.ime-zh { color: #1a6fbf; font-size: 20px; line-height: 29px; }
.ime-p { color: #1a6fbf; font: 700 18px/22px "Liberation Sans", sans-serif; }
.watermark { position: absolute; left: 0; top: 1px; font: 15.500px/20px "Open Sans", sans-serif; color: rgba(175, 175, 175, .8); white-space: nowrap; z-index: 3; }
</style>
